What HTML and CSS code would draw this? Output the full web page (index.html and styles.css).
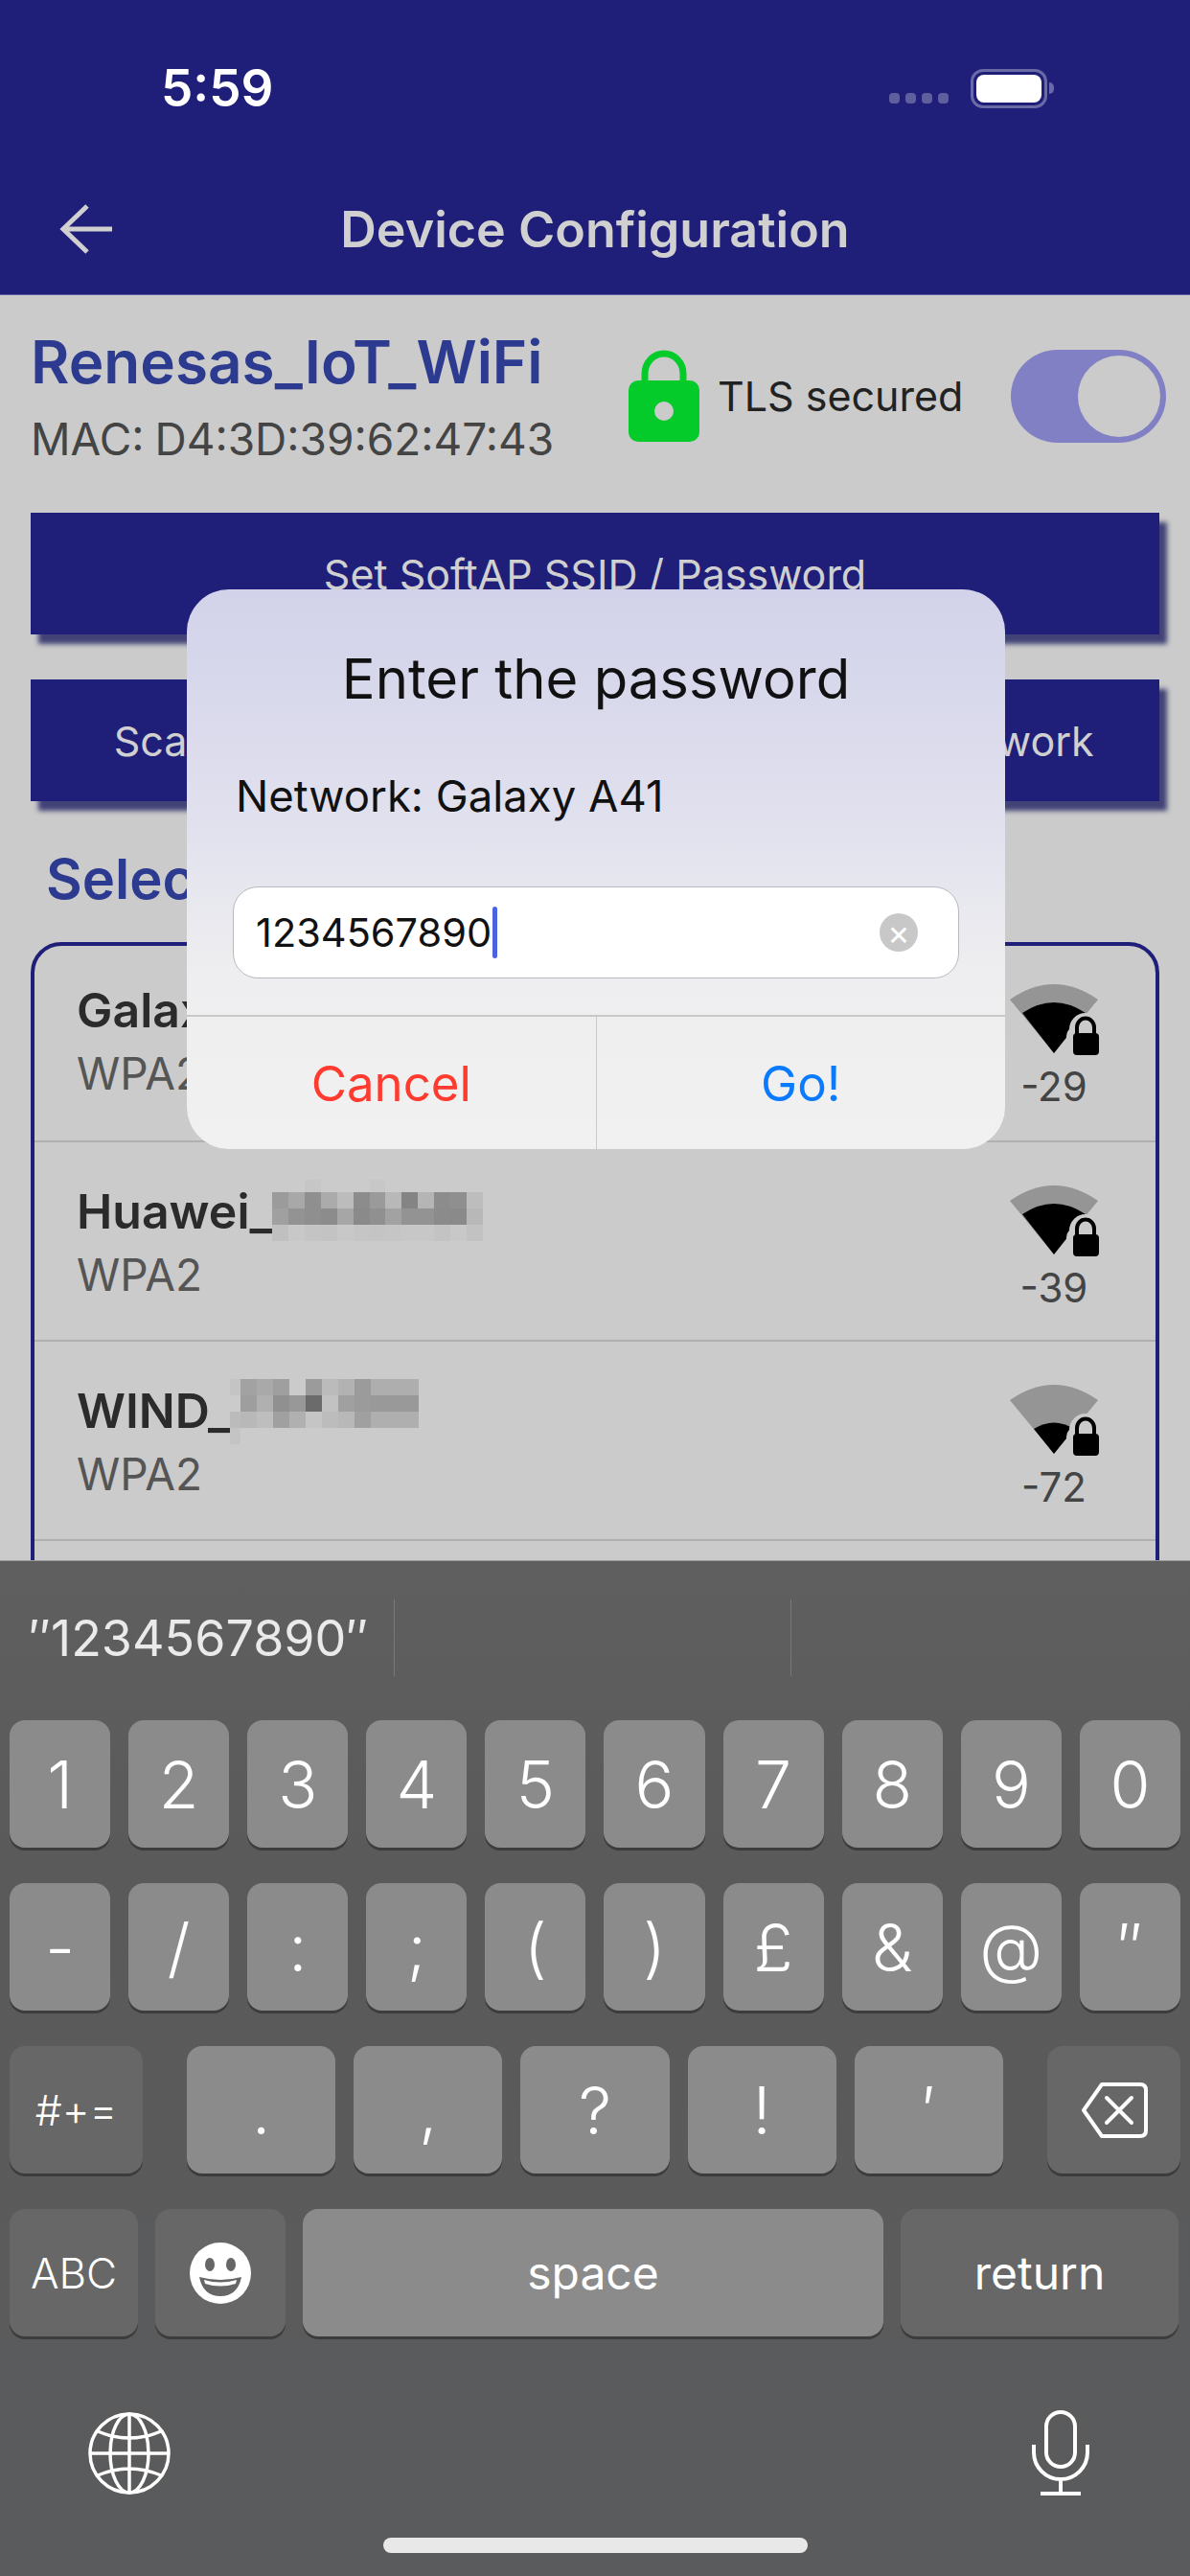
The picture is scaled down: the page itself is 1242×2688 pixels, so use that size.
FILE: index.html
```html
<!DOCTYPE html>
<html lang="en">
<head>
  <meta charset="UTF-8">
  <meta name="viewport" content="width=device-width, initial-scale=1.0">
  <title>Device Configuration</title>
  <link rel="stylesheet" href="styles.css">
</head>
<body>
<svg class="defs" width="0" height="0">
  <symbol id="lock-badge" viewBox="0 0 100 84">
    <rect x="63" y="47" width="41" height="37" rx="10" fill="#cbcbcb"/>
    <circle cx="83" cy="50" r="17" fill="#cbcbcb"/>
    <path d="M74 56V48a9 9.500 0 0 1 18 0V56" fill="none" stroke="#000" stroke-width="4"/>
    <rect x="70" y="54" width="27" height="23" rx="4" fill="#000"/>
  </symbol>
</svg>
<div class="page">
  <header class="top">
    <div class="status-bar">
      <span class="time">5:59</span>
      <div class="status-icons">
        <div class="dots"><i></i><i></i><i></i><i></i></div>
        <div class="battery"><div class="battery-fill"></div></div>
        <div class="battery-nub"></div>
      </div>
    </div>
    <div class="app-bar">
      <svg class="back" width="56" height="54" viewBox="0 0 56 54"><path d="M29 3L4 27L29 51M4 27H55" fill="none" stroke="#d0d0d0" stroke-width="5"/></svg>
      <h1>Device Configuration</h1>
      <span></span>
    </div>
  </header>

  <main class="content">
    <section class="device">
      <div class="device-info">
        <h2 class="device-name">Renesas_IoT_WiFi</h2>
        <p class="mac">MAC: <span class="mac-value">D4:3D:39:62:47:43</span></p>
      </div>
      <div class="tls">
        <svg width="76" height="98" viewBox="0 0 76 98"><path d="M18 36V26a20 21 0 0 1 40 0V36" fill="none" stroke="#05cb2a" stroke-width="7"/><rect x="1" y="33" width="74" height="64" rx="10" fill="#05cb2a"/><circle cx="38" cy="65" r="10" fill="#cbcbcb"/></svg>
        <span>TLS secured</span>
      </div>
      <div class="toggle"><div class="thumb"></div></div>
    </section>

    <button class="btn btn-wide">Set SoftAP SSID / Password</button>
    <div class="btn-row">
      <button class="btn btn-scan">Scan networks</button>
      <button class="btn btn-hidden">Hidden network</button>
    </div>

    <h3 class="select-title">Select a network</h3>

    <div class="wifi-list">
      <div class="wifi-row">
        <div class="wifi-text">
          <div class="wifi-name">Galaxy A41</div>
          <div class="wifi-sec">WPA2</div>
        </div>
        <div class="signal">
          <svg width="100" height="84" viewBox="0 0 100 84"><path d="M50 75L4 19Q50 -13 96 19Z" fill="#959595"/><path d="M50 75L17 33Q50 11 83 33Z" fill="#000"/><use href="#lock-badge" width="100" height="84"/></svg>
          <span>-29</span>
        </div>
      </div>
      <div class="wifi-row">
        <div class="wifi-text">
          <div class="wifi-name">Huawei_<svg class="mosaic" width="220" height="64" viewBox="0 0 13 3.8" preserveAspectRatio="none" shape-rendering="crispEdges">
            <rect x="2" y="0" width="1" height=".8" fill="#c6c6c6"/><rect x="6" y="0" width="1" height=".8" fill="#c7c7c7"/>
            <rect x="0" y=".8" width="1" height="1" fill="#9b9b9b"/><rect x="1" y=".8" width="1" height="1" fill="#a8a8a8"/><rect x="2" y=".8" width="1" height="1" fill="#8f8f8f"/><rect x="3" y=".8" width="1" height="1" fill="#ababab"/><rect x="4" y=".8" width="1" height="1" fill="#bcbcbc"/><rect x="5" y=".8" width="1" height="1" fill="#8c8c8c"/><rect x="6" y=".8" width="1" height="1" fill="#9a9a9a"/><rect x="7" y=".8" width="1" height="1" fill="#b8b8b8"/><rect x="8" y=".8" width="1" height="1" fill="#848484"/><rect x="9" y=".8" width="1" height="1" fill="#b5b5b5"/><rect x="10" y=".8" width="1" height="1" fill="#8c8c8c"/><rect x="11" y=".8" width="1" height="1" fill="#8f8f8f"/><rect x="12" y=".8" width="1" height="1" fill="#bdbdbd"/>
            <rect x="0" y="1.800" width="1" height="1" fill="#a0a0a0"/><rect x="1" y="1.800" width="1" height="1" fill="#939393"/><rect x="2" y="1.800" width="1" height="1" fill="#8f8f8f"/><rect x="3" y="1.800" width="1" height="1" fill="#8c8c8c"/><rect x="4" y="1.800" width="1" height="1" fill="#a6a6a6"/><rect x="5" y="1.800" width="1" height="1" fill="#8a8a8a"/><rect x="6" y="1.800" width="1" height="1" fill="#909090"/><rect x="7" y="1.800" width="1" height="1" fill="#a2a2a2"/><rect x="8" y="1.800" width="1" height="1" fill="#939393"/><rect x="9" y="1.800" width="1" height="1" fill="#939393"/><rect x="10" y="1.800" width="1" height="1" fill="#8b8b8b"/><rect x="11" y="1.800" width="1" height="1" fill="#8a8a8a"/><rect x="12" y="1.800" width="1" height="1" fill="#b8b8b8"/>
            <rect x="0" y="2.800" width="1" height="1" fill="#c0c0c0"/><rect x="1" y="2.800" width="1" height="1" fill="#c8c8c8"/><rect x="2" y="2.800" width="1" height="1" fill="#c4c4c4"/><rect x="3" y="2.800" width="1" height="1" fill="#c3c3c3"/><rect x="4" y="2.800" width="1" height="1" fill="#c8c8c8"/><rect x="5" y="2.800" width="1" height="1" fill="#c5c5c5"/><rect x="6" y="2.800" width="1" height="1" fill="#c4c4c4"/><rect x="7" y="2.800" width="1" height="1" fill="#c5c5c5"/><rect x="8" y="2.800" width="1" height="1" fill="#c7c7c7"/><rect x="9" y="2.800" width="1" height="1" fill="#c7c7c7"/><rect x="10" y="2.800" width="1" height="1" fill="#c3c3c3"/><rect x="11" y="2.800" width="1" height="1" fill="#c8c8c8"/><rect x="12" y="2.800" width="1" height="1" fill="#c2c2c2"/>
          </svg></div>
          <div class="wifi-sec">WPA2</div>
        </div>
        <div class="signal">
          <svg width="100" height="84" viewBox="0 0 100 84"><path d="M50 75L4 19Q50 -13 96 19Z" fill="#959595"/><path d="M50 75L17 33Q50 11 83 33Z" fill="#000"/><use href="#lock-badge" width="100" height="84"/></svg>
          <span>-39</span>
        </div>
      </div>
      <div class="wifi-row">
        <div class="wifi-text">
          <div class="wifi-name">WIND_<svg class="mosaic" width="197" height="68" viewBox="0 0 197 68" shape-rendering="crispEdges">
            <rect x="0" y="0" width="11" height="17" fill="#c4c4c4"/><rect x="11" y="0" width="17" height="17" fill="#a2a2a2"/><rect x="28" y="0" width="17" height="17" fill="#a9a9a9"/><rect x="45" y="0" width="17" height="17" fill="#9f9f9f"/><rect x="79" y="0" width="17" height="17" fill="#9b9b9b"/><rect x="96" y="0" width="17" height="17" fill="#bbbbbb"/><rect x="113" y="0" width="17" height="17" fill="#b2b2b2"/><rect x="130" y="0" width="17" height="17" fill="#9b9b9b"/><rect x="147" y="0" width="50" height="17" fill="#aeaeae"/>
            <rect x="11" y="17" width="17" height="17" fill="#9e9e9e"/><rect x="28" y="17" width="17" height="17" fill="#b0b0b0"/><rect x="45" y="17" width="17" height="17" fill="#909090"/><rect x="62" y="17" width="17" height="17" fill="#989898"/><rect x="79" y="17" width="17" height="17" fill="#6b6b6b"/><rect x="96" y="17" width="17" height="17" fill="#c2c2c2"/><rect x="113" y="17" width="17" height="17" fill="#a0a0a0"/><rect x="130" y="17" width="17" height="17" fill="#9b9b9b"/><rect x="147" y="17" width="50" height="17" fill="#999999"/>
            <rect x="0" y="34" width="11" height="17" fill="#bbbbbb"/><rect x="11" y="34" width="17" height="17" fill="#b8b8b8"/><rect x="28" y="34" width="17" height="17" fill="#bebebe"/><rect x="45" y="34" width="17" height="17" fill="#a0a0a0"/><rect x="62" y="34" width="17" height="17" fill="#b0b0b0"/><rect x="79" y="34" width="17" height="17" fill="#c5c5c5"/><rect x="96" y="34" width="17" height="17" fill="#bcbcbc"/><rect x="113" y="34" width="17" height="17" fill="#b8b8b8"/><rect x="130" y="34" width="17" height="17" fill="#a0a0a0"/><rect x="147" y="34" width="50" height="17" fill="#afafaf"/>
            <rect x="0" y="51" width="11" height="17" fill="#c4c4c4"/>
          </svg></div>
          <div class="wifi-sec">WPA2</div>
        </div>
        <div class="signal">
          <svg width="100" height="84" viewBox="0 0 100 84"><path d="M50 75L4 19Q50 -13 96 19Z" fill="#959595"/><path d="M50 75L29 49Q50 36 71 49Z" fill="#000"/><use href="#lock-badge" width="100" height="84"/></svg>
          <span>-72</span>
        </div>
      </div>
    </div>
  </main>

  <div class="keyboard">
    <div class="suggestions">
      <div class="suggestion">″1234567890″</div>
      <div class="suggestion"></div>
      <div class="suggestion"></div>
    </div>
    <div class="key-rows">
      <div class="key-row">
        <div class="key">1</div><div class="key">2</div><div class="key">3</div><div class="key">4</div><div class="key">5</div><div class="key">6</div><div class="key">7</div><div class="key">8</div><div class="key">9</div><div class="key">0</div>
      </div>
      <div class="key-row">
        <div class="key">-</div><div class="key">/</div><div class="key">:</div><div class="key">;</div><div class="key">(</div><div class="key">)</div><div class="key">£</div><div class="key">&amp;</div><div class="key">@</div><div class="key">″</div>
      </div>
      <div class="key-row row-three">
        <div class="key key-dark key-small key-side">#+=</div>
        <div class="punct">
          <div class="key">.</div><div class="key">,</div><div class="key">?</div><div class="key">!</div><div class="key">′</div>
        </div>
        <div class="key key-dark key-side">
          <svg width="70" height="60" viewBox="0 0 70 60"><path d="M22 3H62Q68 3 68 9V51Q68 57 62 57H22L3 30Z" fill="none" stroke="#fff" stroke-width="4" stroke-linejoin="round"/><path d="M27 17L53 43M53 17L27 43" fill="none" stroke="#fff" stroke-width="4" stroke-linecap="round"/></svg>
        </div>
      </div>
      <div class="key-row row-four">
        <div class="key key-dark key-small key-abc">ABC</div>
        <div class="key key-dark key-emoji">
          <svg width="64" height="64" viewBox="0 0 64 64"><circle cx="32" cy="32" r="32" fill="#fff"/><ellipse cx="21" cy="23" rx="5" ry="7" fill="#666"/><ellipse cx="43" cy="23" rx="5" ry="7" fill="#666"/><path d="M10 36Q32 42 54 36Q50 56 32 56Q14 56 10 36Z" fill="#666"/><path d="M15 39Q32 44 49 39L48 43Q32 48 16 43Z" fill="#fff"/></svg>
        </div>
        <div class="key key-space">space</div>
        <div class="key key-dark key-return">return</div>
      </div>
    </div>
    <div class="kb-bottom">
      <svg width="86" height="86" viewBox="0 0 86 86" fill="none" stroke="#fff" stroke-width="3.500"><circle cx="43" cy="43" r="41"/><ellipse cx="43" cy="43" rx="20" ry="41"/><path d="M43 2V84M2 43H84M10 20Q43 34 76 20M10 66Q43 52 76 66"/></svg>
      <svg width="60" height="90" viewBox="0 0 60 90" fill="none" stroke="#fff" stroke-width="4"><rect x="15" y="2" width="30" height="57" rx="15"/><path d="M2 36V44a28 28 0 0 0 56 0V36M30 72V86M9 87H51"/></svg>
    </div>
    <div class="home-bar"></div>
  </div>

  <div class="dialog">
    <div class="dialog-body">
      <div class="dialog-title">Enter the password</div>
      <div class="dialog-msg">Network: Galaxy A41</div>
      <div class="dialog-input">
        <span>1234567890</span><i class="caret"></i>
        <div class="clear">×</div>
      </div>
    </div>
    <div class="dialog-actions">
      <div class="action action-cancel">Cancel</div>
      <div class="action action-go">Go!</div>
    </div>
  </div>
</div>
</body>
</html>
```

FILE: styles.css
```css
* {
  box-sizing: border-box;
}
body {
  margin: 0;
  font-family: Inter, "Liberation Sans", sans-serif;
}
h1, h2, h3, p {
  margin: 0;
}
.defs {
  position: absolute;
}
.page {
  position: relative;
  width: 1242px;
  height: 2688px;
  display: flex;
  flex-direction: column;
  overflow: hidden;
  background: #cbcbcb;
}

/* top bar */
.top {
  height: 308px;
  background: #1f1f7a;
  border-bottom: 1px solid #5a5a9c;
}
.status-bar {
  height: 184px;
  display: flex;
  justify-content: space-between;
  align-items: center;
  padding: 0 142px 0 168px;
}
.time {
  color: #fff;
  font-size: 53px;
  font-weight: 600;
}
.status-icons {
  display: flex;
  align-items: center;
}
.dots {
  display: flex;
  gap: 6px;
  margin: 20px 23px 0 0;
}
.dots i {
  width: 11px;
  height: 11px;
  border-radius: 4px;
  background: #5f5f9e;
}
.battery {
  width: 80px;
  height: 41px;
  padding: 3px;
  border: 3px solid #6a6aa6;
  border-radius: 13px;
}
.battery-fill {
  height: 100%;
  background: #fff;
  border-radius: 8px;
}
.battery-nub {
  width: 5px;
  height: 12px;
  margin-left: 2px;
  background: #6a6aa6;
  border-radius: 0 6px 6px 0;
}
.app-bar {
  height: 110px;
  display: grid;
  grid-template-columns: 1fr auto 1fr;
  align-items: center;
  padding: 0 62px;
}
.app-bar h1 {
  color: #d0d0d0;
  font-size: 52px;
  font-weight: 600;
}

/* content */
.content {
  flex: 1;
  min-height: 0;
  overflow: hidden;
  padding: 0 32px;
}
.device {
  display: flex;
  align-items: center;
  height: 210px;
  margin-bottom: 17px;
}
.device-info {
  width: 623px;
  flex: none;
}
.device-name {
  color: #2c3a8f;
  font-size: 62px;
  font-weight: 600;
}
.mac {
  margin-top: 15px;
  color: #444;
  font-size: 46px;
  white-space: nowrap;
}
.mac-value {
  margin-left: -2px;
}
.tls {
  display: flex;
  align-items: center;
  gap: 18px;
  width: 400px;
  flex: none;
  font-size: 43px;
  color: #222;
}
.toggle {
  width: 162px;
  height: 97px;
  flex: none;
  padding: 6px;
  display: flex;
  justify-content: flex-end;
  border-radius: 49px;
  background: #8280c4;
}
.thumb {
  width: 86px;
  height: 85px;
  border-radius: 50%;
  background: #cbcbcb;
}
.btn {
  display: block;
  border: none;
  background: #1f1f7a;
  color: #d0d0d0;
  font-family: inherit;
  font-size: 43px;
  box-shadow: 8px 10px 5px rgba(20, 20, 90, 0.75);
}
.btn-wide {
  width: 1178px;
  height: 127px;
}
.btn-row {
  display: flex;
  justify-content: space-between;
  margin-top: 47px;
}
.btn-scan {
  width: 476px;
  height: 127px;
}
.btn-hidden {
  width: 460px;
  height: 127px;
}
.select-title {
  margin: 46px 0 0 16px;
  color: #2c3a8f;
  font-size: 58px;
  font-weight: 600;
}
.wifi-list {
  margin-top: 31px;
  height: 800px;
  border: 4px solid #1f1f7a;
  border-radius: 32px;
}
.wifi-row {
  height: 208px;
  padding: 42px 56px 0 44px;
  display: flex;
  justify-content: space-between;
  border-bottom: 2px solid #b0b0b0;
}
.wifi-row:first-child {
  height: 205px;
  padding-top: 37px;
}
.wifi-name {
  display: flex;
  align-items: flex-start;
  height: 60px;
  color: #2b2b2b;
  font-size: 50px;
  font-weight: 600;
}
.mosaic {
  flex: none;
  margin-top: -3px;
}
.wifi-sec {
  margin-top: 8px;
  color: #555;
  font-size: 46px;
}
.signal {
  width: 100px;
  display: flex;
  flex-direction: column;
  align-items: center;
  color: #444;
  font-size: 42px;
}

/* dialog */
.dialog {
  position: absolute;
  left: 195px;
  top: 615px;
  width: 854px;
  height: 584px;
  display: flex;
  flex-direction: column;
  border-radius: 44px;
  overflow: hidden;
  background: linear-gradient(#d2d2ea, #e0e0ee 40%, #eeeef0 68%, #f1f1f1);
}
.dialog-body {
  flex: 1;
  padding: 0 48px;
}
.dialog-title {
  margin-top: 58px;
  text-align: center;
  color: #111;
  font-size: 58px;
}
.dialog-msg {
  margin-top: 60px;
  margin-left: 3px;
  color: #111;
  font-size: 45.500px;
}
.dialog-input {
  display: flex;
  align-items: center;
  height: 96px;
  margin-top: 67px;
  padding: 0 42px 0 23px;
  background: #fff;
  border: 1px solid #b8b8c0;
  border-radius: 26px;
  font-size: 41.500px;
  color: #111;
}
.caret {
  width: 5px;
  height: 54px;
  margin-left: 1px;
  border-radius: 3px;
  background: #4a63e0;
}
.clear {
  width: 40px;
  height: 40px;
  margin-left: auto;
  display: flex;
  align-items: center;
  justify-content: center;
  border-radius: 50%;
  background: #c8c8c8;
  color: #fff;
  font-size: 36px;
  line-height: 1;
}
.dialog-actions {
  display: flex;
  height: 140px;
  border-top: 2px solid #c8c8c8;
}
.action {
  flex: 1;
  display: flex;
  align-items: center;
  justify-content: center;
  font-size: 51px;
}
.action-cancel {
  color: #ff3b30;
  border-right: 1px solid #c8c8c8;
}
.action-go {
  color: #0a7aff;
}

/* keyboard */
.keyboard {
  height: 1060px;
  flex: none;
  background: linear-gradient(#605f5f, #5a5a5b 30%, #5a5b5c);
  border-top: 1px solid #9a9a9a;
  color: #fff;
}
.suggestions {
  display: grid;
  grid-template-columns: 412px 414px 1fr;
  height: 166px;
  padding-top: 40px;
}
.suggestion {
  height: 80px;
  padding-left: 30px;
  display: flex;
  align-items: center;
  font-size: 52px;
  color: #eaeaea;
  border-right: 1px solid #797979;
}
.suggestion:last-child {
  border-right: none;
}
.key-rows {
  display: flex;
  flex-direction: column;
  gap: 37px;
  padding: 0 10px;
}
.key-row {
  display: grid;
  grid-template-columns: repeat(10, 1fr);
  gap: 19px;
}
.key {
  height: 133px;
  display: flex;
  align-items: center;
  justify-content: center;
  border-radius: 16px;
  background: #8b8b8b;
  box-shadow: 0 3px 0 #3c3c3c;
  font-size: 68px;
  font-weight: 300;
}
.key-dark {
  background: #676767;
}
.key-small {
  font-size: 44px;
}
.row-three {
  display: flex;
  justify-content: space-between;
}
.key-side {
  width: 139px;
}
.punct {
  width: 852px;
  display: grid;
  grid-template-columns: repeat(5, 1fr);
  gap: 19px;
}
.row-four {
  display: flex;
  gap: 18px;
}
.key-abc {
  width: 134px;
}
.key-emoji {
  width: 136px;
}
.key-space {
  width: 606px;
  font-size: 48px;
  font-weight: 400;
}
.key-return {
  width: 290px;
  font-size: 48px;
  font-weight: 400;
}
.kb-bottom {
  display: flex;
  justify-content: space-between;
  align-items: center;
  margin-top: 77px;
  padding: 0 105px 0 92px;
}
.home-bar {
  width: 443px;
  height: 16px;
  margin: 43px auto 0;
  border-radius: 8px;
  background: #e8e8e8;
}
```
